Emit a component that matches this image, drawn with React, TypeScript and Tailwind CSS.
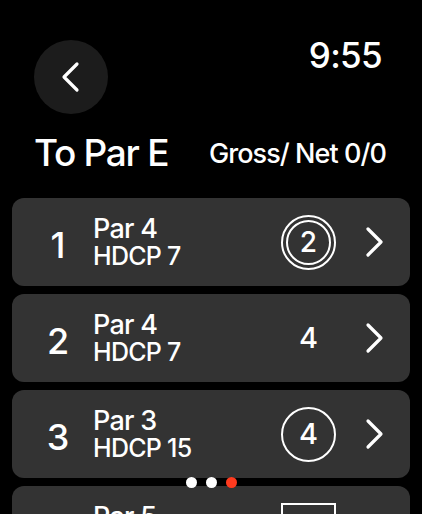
type Hole = {
  num: number;
  par: number;
  hdcp: number;
  score: number;
  mark: 'double' | 'circle' | 'none' | 'square';
};

const holes: Hole[] = [
  {num: 1, par: 4, hdcp: 7, score: 2, mark: 'double'},
  {num: 2, par: 4, hdcp: 7, score: 4, mark: 'none'},
  {num: 3, par: 3, hdcp: 15, score: 4, mark: 'circle'},
  {num: 4, par: 5, hdcp: 3, score: 6, mark: 'square'},
];

const Chevron = ({left}: {left?: boolean}) => (
  <svg width="20" height="32" viewBox="0 0 20 32" fill="none">
    <path
      d={left ? 'M16 3 L3 16 L16 29' : 'M4 3 L17 16 L4 29'}
      stroke="white"
      strokeWidth="3.2"
      strokeLinecap="round"
      strokeLinejoin="round"
    />
  </svg>
);

const Score = ({score, mark}: {score: number; mark: Hole['mark']}) => {
  if (mark === 'double') {
    return (
      <div className="flex h-[55px] w-[55px] items-center justify-center rounded-full border-2 border-white">
        <div className="flex h-[45px] w-[45px] items-center justify-center rounded-full border-2 border-white text-[28px] font-medium">
          {score}
        </div>
      </div>
    );
  }
  if (mark === 'circle') {
    return (
      <div className="flex h-[55px] w-[55px] items-center justify-center rounded-full border-2 border-white text-[29px] font-medium">
        {score}
      </div>
    );
  }
  if (mark === 'square') {
    return (
      <div className="flex h-[55px] w-[55px] items-center justify-center border-2 border-white text-[29px] font-medium">
        {score}
      </div>
    );
  }
  return (
    <div className="flex h-[55px] w-[55px] items-center justify-center text-[29px] font-medium">
      {score}
    </div>
  );
};

export default function App() {
  return (
    <div
      className="relative h-[514px] w-[422px] overflow-hidden bg-black text-white"
      style={{fontFamily: 'Inter, "Noto Sans", sans-serif'}}
    >
      <div className="flex items-start justify-between pl-[34px] pr-[40px] pt-[40px]">
        <div className="flex h-[74px] w-[74px] items-center justify-center rounded-full bg-[#1c1c1c]">
          <Chevron left />
        </div>
        <div className="mt-[-7px] text-[35px] font-medium leading-[44px] tracking-[-0.02em]">9:55</div>
      </div>

      <div className="mt-[17px] flex items-end justify-between pl-[34px] pr-[36px]">
        <div className="text-[37px] font-medium leading-[44px] tracking-[-0.035em]">To Par E</div>
        <div className="pb-[5px] text-[27px] font-medium leading-[32px] tracking-[-0.035em]">
          Gross/ Net 0/0
        </div>
      </div>

      <div className="mx-[12px] mt-[23px] flex flex-col gap-[8px]">
        {holes.map((h) => (
          <div
            key={h.num}
            className="flex h-[88px] items-center rounded-[12px] bg-[#333333] pl-[24px] pr-[26px]"
          >
            <div className="mt-[6px] w-[44px] text-center text-[36px] font-medium leading-none">{h.num}</div>
            <div className="ml-[13px] flex flex-col tracking-[-0.045em]">
              <span className="text-[27px] font-medium leading-[29px]">Par {h.par}</span>
              <span className="text-[25px] font-medium leading-[27px]">HDCP {h.hdcp}</span>
            </div>
            <div className="ml-auto flex items-center gap-[28px]">
              <Score score={h.score} mark={h.mark} />
              <Chevron />
            </div>
          </div>
        ))}
      </div>

      <div className="absolute left-[186px] top-[477px] flex gap-[9px]">
        <span className="h-[11px] w-[11px] rounded-full bg-white" />
        <span className="h-[11px] w-[11px] rounded-full bg-white" />
        <span className="h-[11px] w-[11px] rounded-full bg-[#ff3b1f]" />
      </div>
    </div>
  );
}
